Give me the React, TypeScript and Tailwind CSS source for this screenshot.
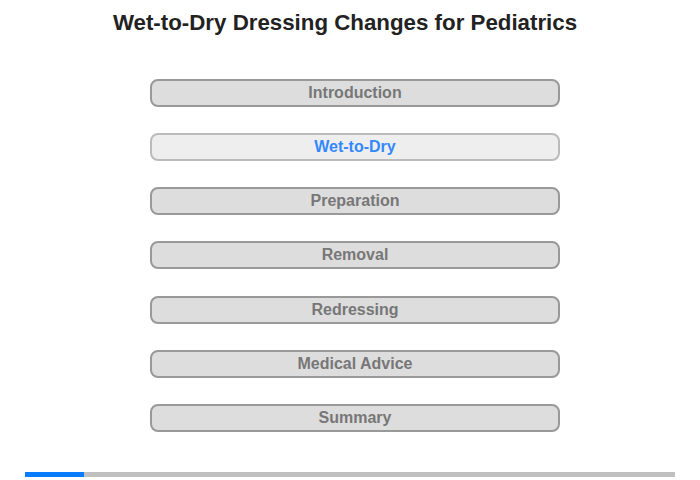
import React from "react";

const sections = [
  "Introduction",
  "Wet-to-Dry",
  "Preparation",
  "Removal",
  "Redressing",
  "Medical Advice",
  "Summary",
];

export default function App() {
  const active = 1;

  return (
    <div className="w-[700px] h-[480px] bg-white font-['Liberation_Sans',Arial,sans-serif] flex flex-col">
      <h1 className="pt-[9px] pr-[10px] text-center text-[22.3px] leading-[28px] font-bold text-[#222]">
        Wet-to-Dry Dressing Changes for Pediatrics
      </h1>

      {/* section menu */}
      <div className="mt-[42px] ml-[150px] w-[410px] flex flex-col gap-[26.15px]">
        {sections.map((s, i) => (
          <button
            key={s}
            className={`h-[28px] rounded-lg border-2 text-[16px] font-bold leading-none ${
              i === active
                ? "bg-[#eeeeee] border-[#bbbbbb] text-[#3388ff]"
                : "bg-[#dddddd] border-[#999999] text-[#777777]"
            }`}
          >
            {s}
          </button>
        ))}
      </div>

      {/* progress */}
      <div className="mt-auto mb-[3px] mx-[25px] h-[5px] bg-[#c0c0c0] flex">
        <div className="w-[59px] h-full bg-[#0a7cff]" />
      </div>
    </div>
  );
}
